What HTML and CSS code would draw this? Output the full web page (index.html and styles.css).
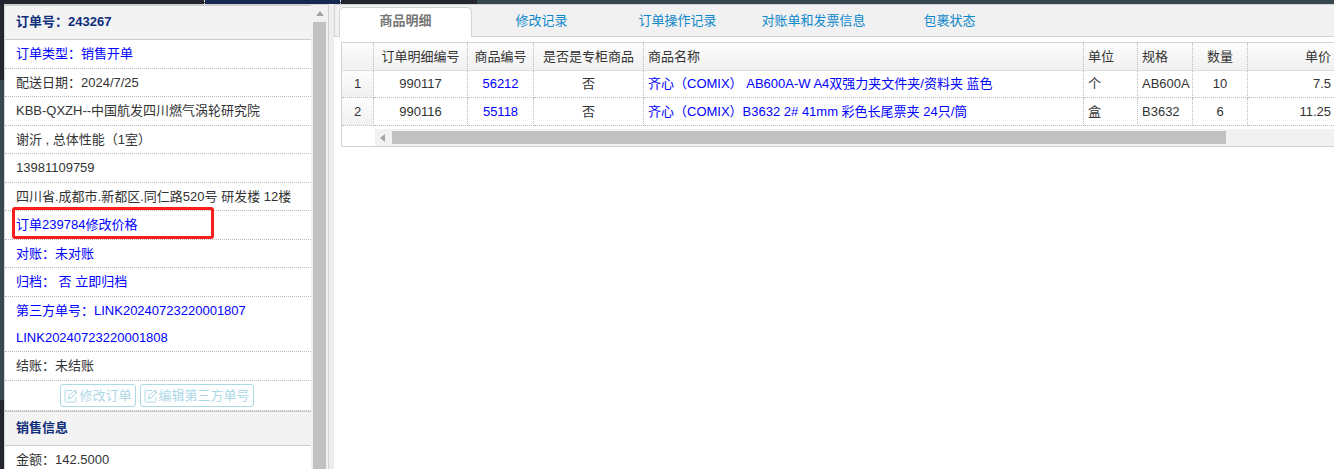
FILE: index.html
```html
<!DOCTYPE html>
<html lang="zh-CN">
<head>
  <meta charset="utf-8">
  <title>订单号：243267</title>
  <meta name="viewport" content="width=device-width, initial-scale=1.0">
  <link rel="stylesheet" href="styles.css">
</head>
<body>
  <div class="topbar">
    <div class="topbar-home"></div>
    <div class="topbar-item"></div>
    <div class="topbar-item active"></div>
    <div class="topbar-item"></div>
  </div>

  <div class="main">
    <div class="rail">
      <div class="rail-top"></div>
      <div class="rail-middle"></div>
      <div class="rail-bottom"></div>
    </div>

    <div class="sidebar">
      <div class="sidebar-content">
        <h2>订单号：243267</h2>
        <ul class="info">
          <li><a href="#">订单类型：销售开单</a></li>
          <li>配送日期：2024/7/25</li>
          <li>KBB-QXZH--中国航发四川燃气涡轮研究院</li>
          <li>谢沂 , 总体性能（1室）</li>
          <li>13981109759</li>
          <li>四川省.成都市.新都区.同仁路520号 研发楼 12楼</li>
          <li class="marked"><a href="#">订单239784修改价格</a></li>
          <li><a href="#">对账：未对账</a></li>
          <li><a href="#">归档： 否 立即归档</a></li>
          <li><a href="#">第三方单号：LINK20240723220001807<br>LINK20240723220001808</a></li>
          <li>结账：未结账</li>
          <li class="actions">
            <button type="button"><svg viewBox="0 0 14 14"><path d="M8 1.5H2.5a1.5 1.5 0 0 0-1.5 1.5V11.5a1.5 1.5 0 0 0 1.5 1.5H10.500a1.500 1.500 0 0 0 1.500-1.500V8"/><path d="M4 10l.7-2.700L11 1l2 2-6.300 6.300zM4.700 7.300l2 2M10 2l2 2"/></svg>修改订单</button>
            <button type="button"><svg viewBox="0 0 14 14"><path d="M8 1.5H2.5a1.5 1.5 0 0 0-1.5 1.5V11.5a1.5 1.5 0 0 0 1.5 1.5H10.500a1.500 1.500 0 0 0 1.500-1.500V8"/><path d="M4 10l.7-2.700L11 1l2 2-6.300 6.300zM4.700 7.300l2 2M10 2l2 2"/></svg>编辑第三方单号</button>
          </li>
        </ul>
        <h2>销售信息</h2>
        <ul class="info">
          <li>金额：142.5000</li>
        </ul>
      </div>
      <div class="scroll-y">
        <svg viewBox="0 0 8 5"><path d="M0 5l4-5 4 5z"/></svg>
        <div class="thumb"></div>
      </div>
    </div>

    <div class="splitter"></div>

    <div class="content">
      <nav class="tabs">
        <a href="#" class="active">商品明细</a>
        <a href="#">修改记录</a>
        <a href="#">订单操作记录</a>
        <a href="#">对账单和发票信息</a>
        <a href="#">包裹状态</a>
      </nav>

      <div class="datagrid">
        <table>
          <colgroup>
            <col class="col-num">
            <col class="col-id">
            <col class="col-code">
            <col class="col-counter">
            <col>
            <col class="col-unit">
            <col class="col-spec">
            <col class="col-spec">
            <col class="col-price">
          </colgroup>
          <thead>
            <tr>
              <th></th>
              <th>订单明细编号</th>
              <th>商品编号</th>
              <th>是否是专柜商品</th>
              <th class="left">商品名称</th>
              <th class="left">单位</th>
              <th class="left">规格</th>
              <th>数量</th>
              <th class="right">单价</th>
            </tr>
          </thead>
          <tbody>
            <tr>
              <td class="num">1</td>
              <td>990117</td>
              <td><a href="#">56212</a></td>
              <td>否</td>
              <td class="left"><a href="#">齐心（COMIX） AB600A-W A4双强力夹文件夹/资料夹 蓝色</a></td>
              <td class="left">个</td>
              <td class="left">AB600A</td>
              <td>10</td>
              <td class="right">7.5</td>
            </tr>
            <tr>
              <td class="num">2</td>
              <td>990116</td>
              <td><a href="#">55118</a></td>
              <td>否</td>
              <td class="left"><a href="#">齐心（COMIX）B3632 2# 41mm 彩色长尾票夹 24只/筒</a></td>
              <td class="left">盒</td>
              <td class="left">B3632</td>
              <td>6</td>
              <td class="right">11.25</td>
            </tr>
          </tbody>
        </table>
        <div class="scroll-x">
          <svg viewBox="0 0 5 8"><path d="M5 0L0 4l5 4z"/></svg>
          <div class="thumb"></div>
        </div>
      </div>
    </div>
  </div>
</body>
</html>
```

FILE: styles.css
```css
*,
*::after {
  box-sizing: border-box;
}

body {
  margin: 0;
  height: 100vh;
  overflow: hidden;
  display: flex;
  flex-direction: column;
  background: #fff;
  color: #333;
  font-family: "Liberation Sans", "Noto Sans CJK SC", sans-serif;
  font-size: 13px;
}

a {
  color: #00f;
  text-decoration: none;
}

/* 顶部和左侧主菜单的边缘 */
.topbar {
  display: flex;
  flex: none;
  height: 4px;
  background: #37474f;
}

.topbar-home {
  width: 69px;
  background: #23262e;
}

.topbar-item {
  width: 136px;
  background: #23262e;
  border-right: 1px dotted #ddd;
}

.topbar-item:last-child {
  border-right: none;
}

.topbar-item.active {
  background: #142850;
}

.main {
  display: flex;
  flex: 1;
  min-height: 0;
}

.rail {
  display: flex;
  flex-direction: column;
  flex: none;
  width: 4px;
}

.rail-top {
  height: 76px;
  background: #23262e;
}

.rail-middle {
  height: 320px;
  background: #37474f;
}

.rail-bottom {
  flex: 1;
  background: #23262e;
}

.sidebar {
  display: flex;
  flex: none;
  width: 325px;
  overflow: hidden;
  border: 1px solid #d3d3d3;
  border-bottom: none;
}

.sidebar-content {
  flex: 1;
}

h2 {
  margin: 0;
  padding-left: 11px;
  height: 35px;
  line-height: 32px;
  font-size: 13px;
  color: #0e2d7a;
  background: #f3f3f3;
  border-top: 1px solid #ccc;
  border-bottom: 1px solid #ccc;
}

.info {
  margin: 0;
  padding: 0;
  list-style: none;
}

.info li {
  padding-left: 11px;
  line-height: 28px;
  border-bottom: 1px dotted #bbb;
  white-space: nowrap;
}

.info li:nth-child(even) {
  line-height: 27px;
}

.info li.marked {
  position: relative;
}

.marked::after {
  content: "";
  position: absolute;
  left: 7px;
  top: -4px;
  width: 202px;
  height: 32px;
  border: 3px solid #f91d1d;
  border-radius: 3px;
}

.info li.actions {
  display: flex;
  justify-content: center;
  gap: 4px;
  height: 30px;
  padding: 3px 2px 3px 0;
}

.actions button {
  display: flex;
  align-items: center;
  gap: 1px;
  height: 23px;
  padding: 0 3px;
  font: inherit;
  color: #add8e6;
  background: #fff;
  border: 1px solid #add8e6;
  border-radius: 3px;
  cursor: pointer;
}

.actions svg {
  width: 14px;
  height: 14px;
  fill: none;
  stroke: #add8e6;
}

.scroll-y {
  display: flex;
  flex-direction: column;
  align-items: center;
  gap: 6px;
  width: 17px;
  padding-top: 6px;
  background: #f1f1f1;
}

.scroll-y svg {
  flex: none;
  width: 8px;
  height: 5px;
  fill: #a3a3a3;
}

.scroll-y .thumb {
  flex: 1;
  width: 13px;
  background: #c1c1c1;
}

.splitter {
  flex: none;
  width: 5px;
  background: #eee;
}

.content {
  flex: 1;
  min-width: 0;
  border-top: 1px solid #d3d3d3;
}

.tabs {
  display: flex;
  gap: 3px;
  height: 32px;
  padding: 2px 0 0 4px;
  background: #f1f1f1;
  border-left: 1px solid #d3d3d3;
  border-bottom: 1px solid #d3d3d3;
}

.tabs a {
  width: 133px;
  height: 30px;
  line-height: 28px;
  text-align: center;
  color: #0e88cc;
}

.tabs a.active {
  color: #777;
  font-weight: bold;
  background: #fff;
  border: 1px solid #d3d3d3;
  border-bottom: none;
  border-radius: 5px 5px 0 0;
  line-height: 26px;
}

.datagrid {
  margin: 5px 0 0 7px;
  border: 1px solid #d3d3d3;
  border-right: none;
}

table {
  width: 100%;
  table-layout: fixed;
  border-collapse: separate;
  border-spacing: 0;
}

.col-num { width: 32px; }
.col-id { width: 94px; }
.col-code { width: 66px; }
.col-counter { width: 110px; }
.col-unit { width: 54px; }
.col-spec { width: 55px; }
.col-price { width: 86px; }

th,
td {
  padding: 0;
  line-height: 26px;
  text-align: center;
  font-weight: normal;
  white-space: nowrap;
  overflow: hidden;
  border-right: 1px dotted #bbb;
  border-bottom: 1px dotted #bbb;
}

th {
  line-height: 27px;
  border-bottom: 1px solid #ddd;
}

tr:last-child td {
  line-height: 27px;
}

thead tr {
  background: linear-gradient(#fdfdfd, #f0f0f0);
}

th:last-child,
td:last-child {
  border-right: none;
}

.num {
  background: linear-gradient(#fdfdfd, #f0f0f0);
}

.left {
  padding-left: 4px;
  text-align: left;
}

.right {
  padding-right: 3px;
  text-align: right;
}

.scroll-x {
  display: flex;
  align-items: center;
  gap: 7px;
  height: 17px;
  margin: 3px 0 0 33px;
  padding: 0 6px 0 5px;
  background: #f1f1f1;
}

.scroll-x svg {
  width: 5px;
  height: 8px;
  fill: #a3a3a3;
}

.scroll-x .thumb {
  width: 88%;
  height: 13px;
  background: #c1c1c1;
}
```
